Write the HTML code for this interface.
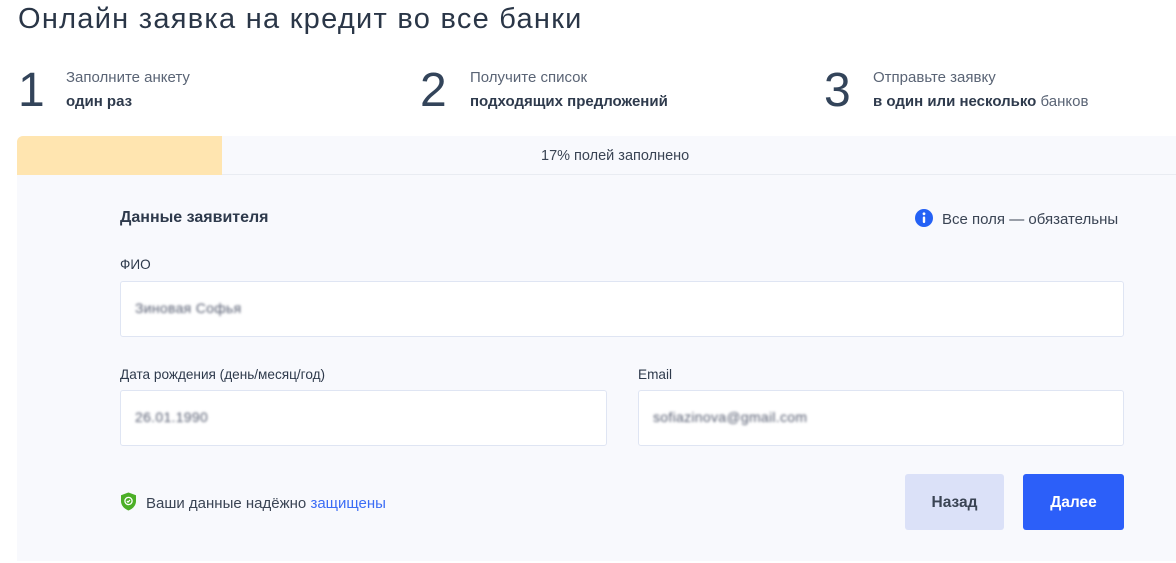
<!DOCTYPE html>
<html><head><meta charset="utf-8"><style>
*{margin:0;padding:0;box-sizing:border-box}
body{width:1176px;height:563px;background:#fff;font-family:"Liberation Sans","DejaVu Sans",sans-serif;color:#2e3a4c;position:relative;overflow:hidden}
.a{position:absolute;white-space:nowrap}
h1{position:absolute;left:18px;top:3px;font-size:29px;font-weight:normal;color:#2a3647;letter-spacing:1.27px}
.num{font-size:48px;color:#33445a;font-weight:normal;top:63px}
.s1{font-size:15px;color:#5a6475;top:69px}
.s2{font-size:15px;color:#2e3a4c;font-weight:bold;top:93px}
.card{position:absolute;left:17px;top:136px;width:1170px;height:425px;background:#f8f9fd;border-radius:6px 0 0 0;overflow:hidden}
.bar{position:absolute;left:0;top:0;width:100%;height:39px;border-bottom:1px solid #e9ecf2}
.fill{position:absolute;left:0;top:0;width:205px;height:39px;background:#ffe5b0}
.inp{position:absolute;background:#fff;border:1px solid #dfe5f3;border-radius:3px;height:56px}
.blur{position:absolute;left:14px;top:18px;font-size:14px;color:#555c70;filter:blur(1.2px);letter-spacing:0.3px}
.lbl{font-size:13.6px;color:#2e3a4c}
.btn{position:absolute;top:338px;height:56px;border-radius:3px;font-size:15.5px;font-weight:bold;text-align:center;line-height:58px}
</style></head><body>
<h1>Онлайн заявка на кредит во все банки</h1>
<div class="a num" style="left:18px">1</div>
<div class="a s1" style="left:66px">Заполните анкету</div>
<div class="a s2" style="left:66px">один раз</div>
<div class="a num" style="left:420px">2</div>
<div class="a s1" style="left:470px">Получите список</div>
<div class="a s2" style="left:470px">подходящих предложений</div>
<div class="a num" style="left:824px">3</div>
<div class="a s1" style="left:873px">Отправьте заявку</div>
<div class="a s2" style="left:873px">в один или несколько <span style="font-weight:normal;color:#5a6475">банков</span></div>

<div class="card">
 <div class="bar"><div class="fill"></div><div class="a" style="left:524px;top:12px;font-size:14.5px;color:#3a4454">17% полей заполнено</div></div>
 <div class="a" style="left:103px;top:73px;font-size:16px;font-weight:bold;color:#2e3a4c">Данные заявителя</div>
 <svg class="a" style="left:898px;top:73px" width="18" height="18" viewBox="0 0 18 18"><circle cx="9" cy="9" r="9" fill="#2461f5"/><rect x="7.8" y="7.5" width="2.4" height="6.5" rx="1" fill="#fff"/><circle cx="9" cy="4.8" r="1.4" fill="#fff"/></svg>
 <div class="a" style="left:925px;top:75px;font-size:15px;color:#3a4454">Все поля — обязательны</div>
 <div class="a lbl" style="left:103px;top:121px">ФИО</div>
 <div class="inp" style="left:103px;top:145px;width:1004px"><div class="blur">Зиновая Софья</div></div>
 <div class="a lbl" style="left:103px;top:231px">Дата рождения (день/месяц/год)</div>
 <div class="inp" style="left:103px;top:254px;width:487px"><div class="blur">26.01.1990</div></div>
 <div class="a lbl" style="left:621px;top:231px">Email</div>
 <div class="inp" style="left:621px;top:254px;width:486px"><div class="blur">sofiazinova@gmail.com</div></div>
 <svg class="a" style="left:103px;top:356px" width="17" height="19" viewBox="0 0 17 19"><path d="M8.5 0.5L16 3.2V9c0 4.5-3.2 7.8-7.5 9.5C4.2 16.8 1 13.5 1 9V3.2z" fill="#4caf27"/><circle cx="8.5" cy="9" r="3.6" fill="none" stroke="#fff" stroke-width="1.3"/><path d="M6.9 9l1.1 1.1 2-2" fill="none" stroke="#fff" stroke-width="1.2"/></svg>
 <div class="a" style="left:129px;top:359px;font-size:15px;color:#3a4454">Ваши данные надёжно <span style="color:#3b6cf5">защищены</span></div>
 <div class="btn" style="left:888px;width:99px;background:#dbe1f8;color:#3a4454">Назад</div>
 <div class="btn" style="left:1006px;width:101px;background:#2c5ff9;color:#fff">Далее</div>
</div>
</body></html>
